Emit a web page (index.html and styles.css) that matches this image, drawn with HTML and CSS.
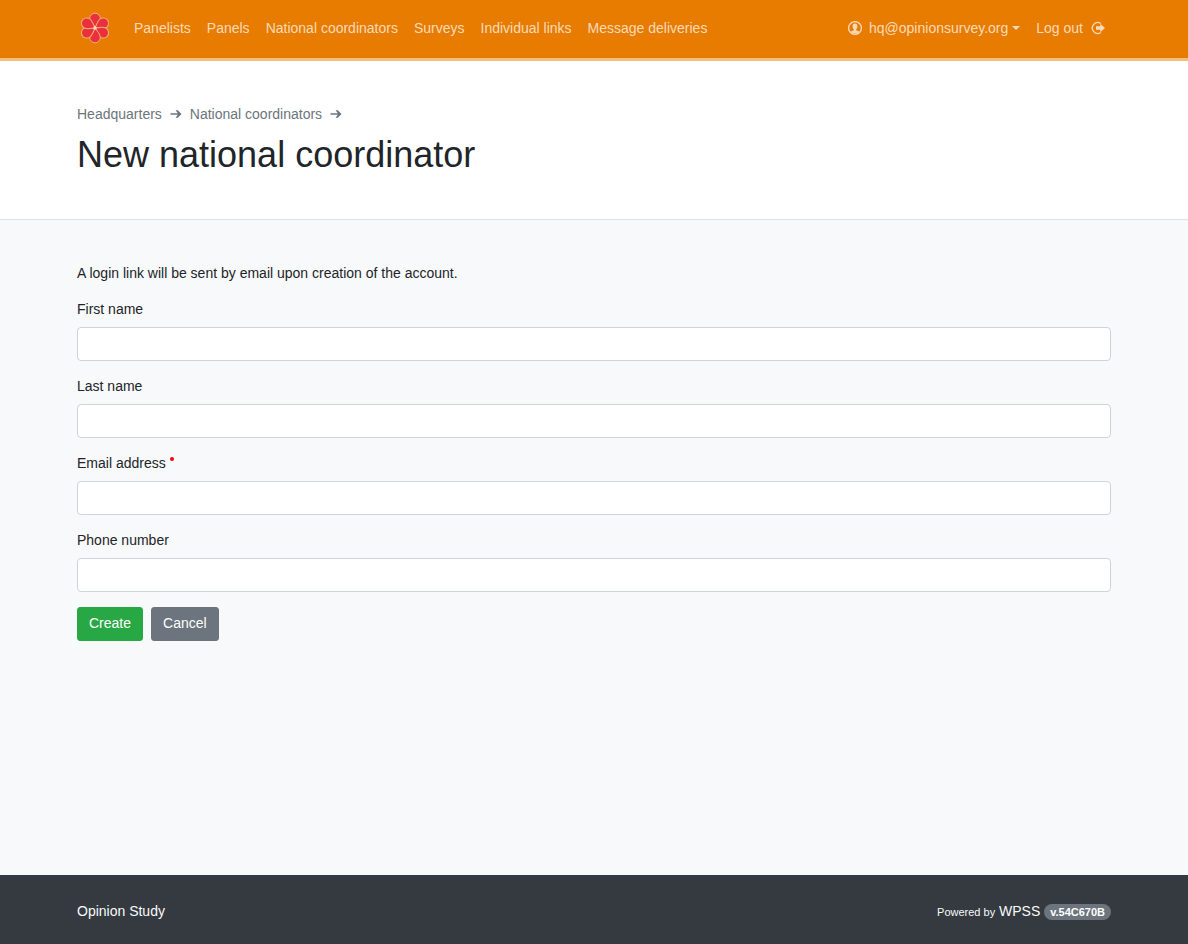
FILE: index.html
```html
<!DOCTYPE html>
<html lang="en">
<head>
<meta charset="utf-8">
<meta name="viewport" content="width=device-width, initial-scale=1">
<title>New national coordinator</title>
<link rel="stylesheet" href="styles.css">
</head>
<body>
<nav class="navbar">
  <div class="container navbar-inner">
    <a class="brand" href="#" aria-label="Home">
      <svg class="logo" viewBox="-18 -18 36 36" aria-hidden="true">
        <defs><path id="petal" d="M0 0C-2 -3 -5.300 -6 -5.300 -9.500A5.300 5.300 0 0 1 5.300 -9.500C5.300 -6 2 -3 0 0Z"/></defs>
        <g class="petals">
          <use href="#petal"/>
          <use href="#petal" transform="rotate(60)"/>
          <use href="#petal" transform="rotate(120)"/>
          <use href="#petal" transform="rotate(180)"/>
          <use href="#petal" transform="rotate(240)"/>
          <use href="#petal" transform="rotate(300)"/>
        </g>
        <circle class="logo-core" r="1.800"/>
      </svg>
    </a>
    <ul class="nav-list">
      <li><a class="nav-link" href="#">Panelists</a></li>
      <li><a class="nav-link" href="#">Panels</a></li>
      <li><a class="nav-link" href="#">National coordinators</a></li>
      <li><a class="nav-link" href="#">Surveys</a></li>
      <li><a class="nav-link" href="#">Individual links</a></li>
      <li><a class="nav-link" href="#">Message deliveries</a></li>
    </ul>
    <ul class="nav-list nav-account">
      <li><a class="nav-link" href="#">
        <svg class="icon icon-user" viewBox="0 0 14 14" aria-hidden="true">
          <circle class="stroke" cx="7" cy="7" r="6.400"/>
          <path class="fill" d="M7 2.600C8.700 2.600 9.400 3.700 9.400 5.200C9.400 6.500 9 7.500 8.200 8.100V9.300L11.400 10.700A6 6 0 0 1 2.600 10.700L5.800 9.300V8.100C5 7.500 4.600 6.500 4.600 5.200C4.600 3.700 5.300 2.600 7 2.600Z"/>
        </svg>hq@opinionsurvey.org<span class="caret"></span></a></li>
      <li><a class="nav-link" href="#">Log out<svg class="icon icon-logout" viewBox="0 0 14 14" aria-hidden="true">
          <path class="stroke" d="M9.800 2.500A5.400 5.400 0 1 0 9.800 11.500"/>
          <path class="fill" d="M5 5.200H9.300V2.700L14 7L9.300 11.300V8.800H5Z"/>
        </svg></a></li>
    </ul>
  </div>
</nav>

<header class="page-header">
  <div class="container">
    <div class="breadcrumb">
      <a href="#">Headquarters</a>
      <svg class="arrow" viewBox="0 0 12 10" aria-hidden="true"><path d="M0.500 4.200H7.800L5.600 1.300H7.800L11.500 5L7.800 8.700H5.600L7.800 5.800H0.500Z"/></svg>
      <a href="#">National coordinators</a>
      <svg class="arrow" viewBox="0 0 12 10" aria-hidden="true"><path d="M0.500 4.200H7.800L5.600 1.300H7.800L11.500 5L7.800 8.700H5.600L7.800 5.800H0.500Z"/></svg>
    </div>
    <h1>New national coordinator</h1>
  </div>
</header>

<main class="content">
  <div class="container">
    <p class="intro">A login link will be sent by email upon creation of the account.</p>
    <form class="form">
      <div class="field"><label for="first">First name</label><input id="first" type="text"></div>
      <div class="field"><label for="last">Last name</label><input id="last" type="text"></div>
      <div class="field"><label for="email">Email address<span class="required"></span></label><input id="email" type="email" required></div>
      <div class="field"><label for="phone">Phone number</label><input id="phone" type="tel"></div>
      <div class="actions">
        <button class="btn btn-success" type="submit">Create</button>
        <a class="btn btn-secondary" href="#">Cancel</a>
      </div>
    </form>
  </div>
</main>

<footer class="footer">
  <div class="container footer-inner">
    <a href="#">Opinion Study</a>
    <div class="powered"><small>Powered by</small> <a href="#">WPSS</a> <span class="badge">v.54C670B</span></div>
  </div>
</footer>
</body>
</html>
```
FILE: styles.css
```css
*, *::before, *::after { box-sizing: border-box; }

body {
  margin: 0;
  min-height: 100vh;
  display: flex;
  flex-direction: column;
  background: #f8f9fa;
  color: #212529;
  font-family: "Liberation Sans", Arial, sans-serif;
  font-size: 14px;
  line-height: 22px;
}

a { color: inherit; text-decoration: none; }

.container {
  width: 100%;
  max-width: 1064px;
  margin: 0 auto;
  padding: 0 15px;
}

.navbar {
  background: #e77c00;
  border-bottom: 3px solid #f3bd80;
}

.navbar-inner {
  display: flex;
  align-items: center;
  padding-top: 10px;
  padding-bottom: 12px;
}

.brand { display: flex; margin-right: 21px; }
.logo { width: 36px; height: 36px; }
.petals { fill: #e9303c; stroke: #f3b27a; stroke-width: 1; }
.logo-core { fill: #fbd9b8; }

.nav-list {
  display: flex;
  gap: 16px;
  margin: 0;
  padding: 0;
  list-style: none;
}

.nav-account { margin-left: auto; padding-right: 6px; }

.nav-link {
  display: flex;
  align-items: center;
  color: #f9dab8;
  white-space: nowrap;
}

.icon { width: 14px; height: 14px; }
.icon .fill { fill: currentColor; }
.icon .stroke { fill: none; stroke: currentColor; stroke-width: 1.3; }
.icon-user { margin-right: 7px; }
.icon-logout { margin-left: 8px; }

.caret {
  margin-left: 4px;
  border: 4px solid transparent;
  border-top-color: currentColor;
  border-bottom: 0;
}

.page-header {
  background: #fff;
  border-bottom: 1px solid #dee2e6;
  padding: 42px 0;
}

.breadcrumb {
  display: flex;
  align-items: center;
  gap: 8px;
  margin-bottom: 8px;
  color: #6c757d;
}

.arrow {
  width: 12px;
  height: 10px;
  fill: currentColor;
}

h1 {
  margin: 0;
  font-size: 36px;
  font-weight: 400;
  line-height: 44px;
}

.content { flex: 1; padding: 42px 0; }
.intro { margin: 0 0 14px; }
.form { display: flex; flex-direction: column; gap: 14px; }
.field { display: flex; flex-direction: column; gap: 7px; }
.field label { display: flex; }

.field input {
  width: 100%;
  height: 34px;
  padding: 5px 11px;
  border: 1px solid #ced4da;
  border-radius: 4px;
  background: #fff;
  color: #495057;
  font: inherit;
}

.required {
  width: 4px;
  height: 4px;
  margin: 5px 0 0 4px;
  border-radius: 50%;
  background: #f00;
}

.actions { display: flex; gap: 8px; padding-top: 1px; }

.btn {
  padding: 4px 11px 6px;
  border: 1px solid;
  border-radius: 3px;
  color: #fff;
  font: inherit;
}

.btn-success { background: #28a745; border-color: #28a745; }
.btn-secondary { background: #6c757d; border-color: #6c757d; }

.footer {
  background: #343a40;
  color: #f8f9fa;
  padding: 25px 0 22px;
}

.footer-inner {
  display: flex;
  align-items: center;
  justify-content: space-between;
}

.powered { height: 22px; }
.powered small { font-size: 11px; }

.badge {
  display: inline-block;
  padding: 2px 6px;
  border-radius: 8px;
  background: #6c757d;
  color: #fff;
  font-size: 11px;
  font-weight: 700;
  line-height: 12px;
}
```
